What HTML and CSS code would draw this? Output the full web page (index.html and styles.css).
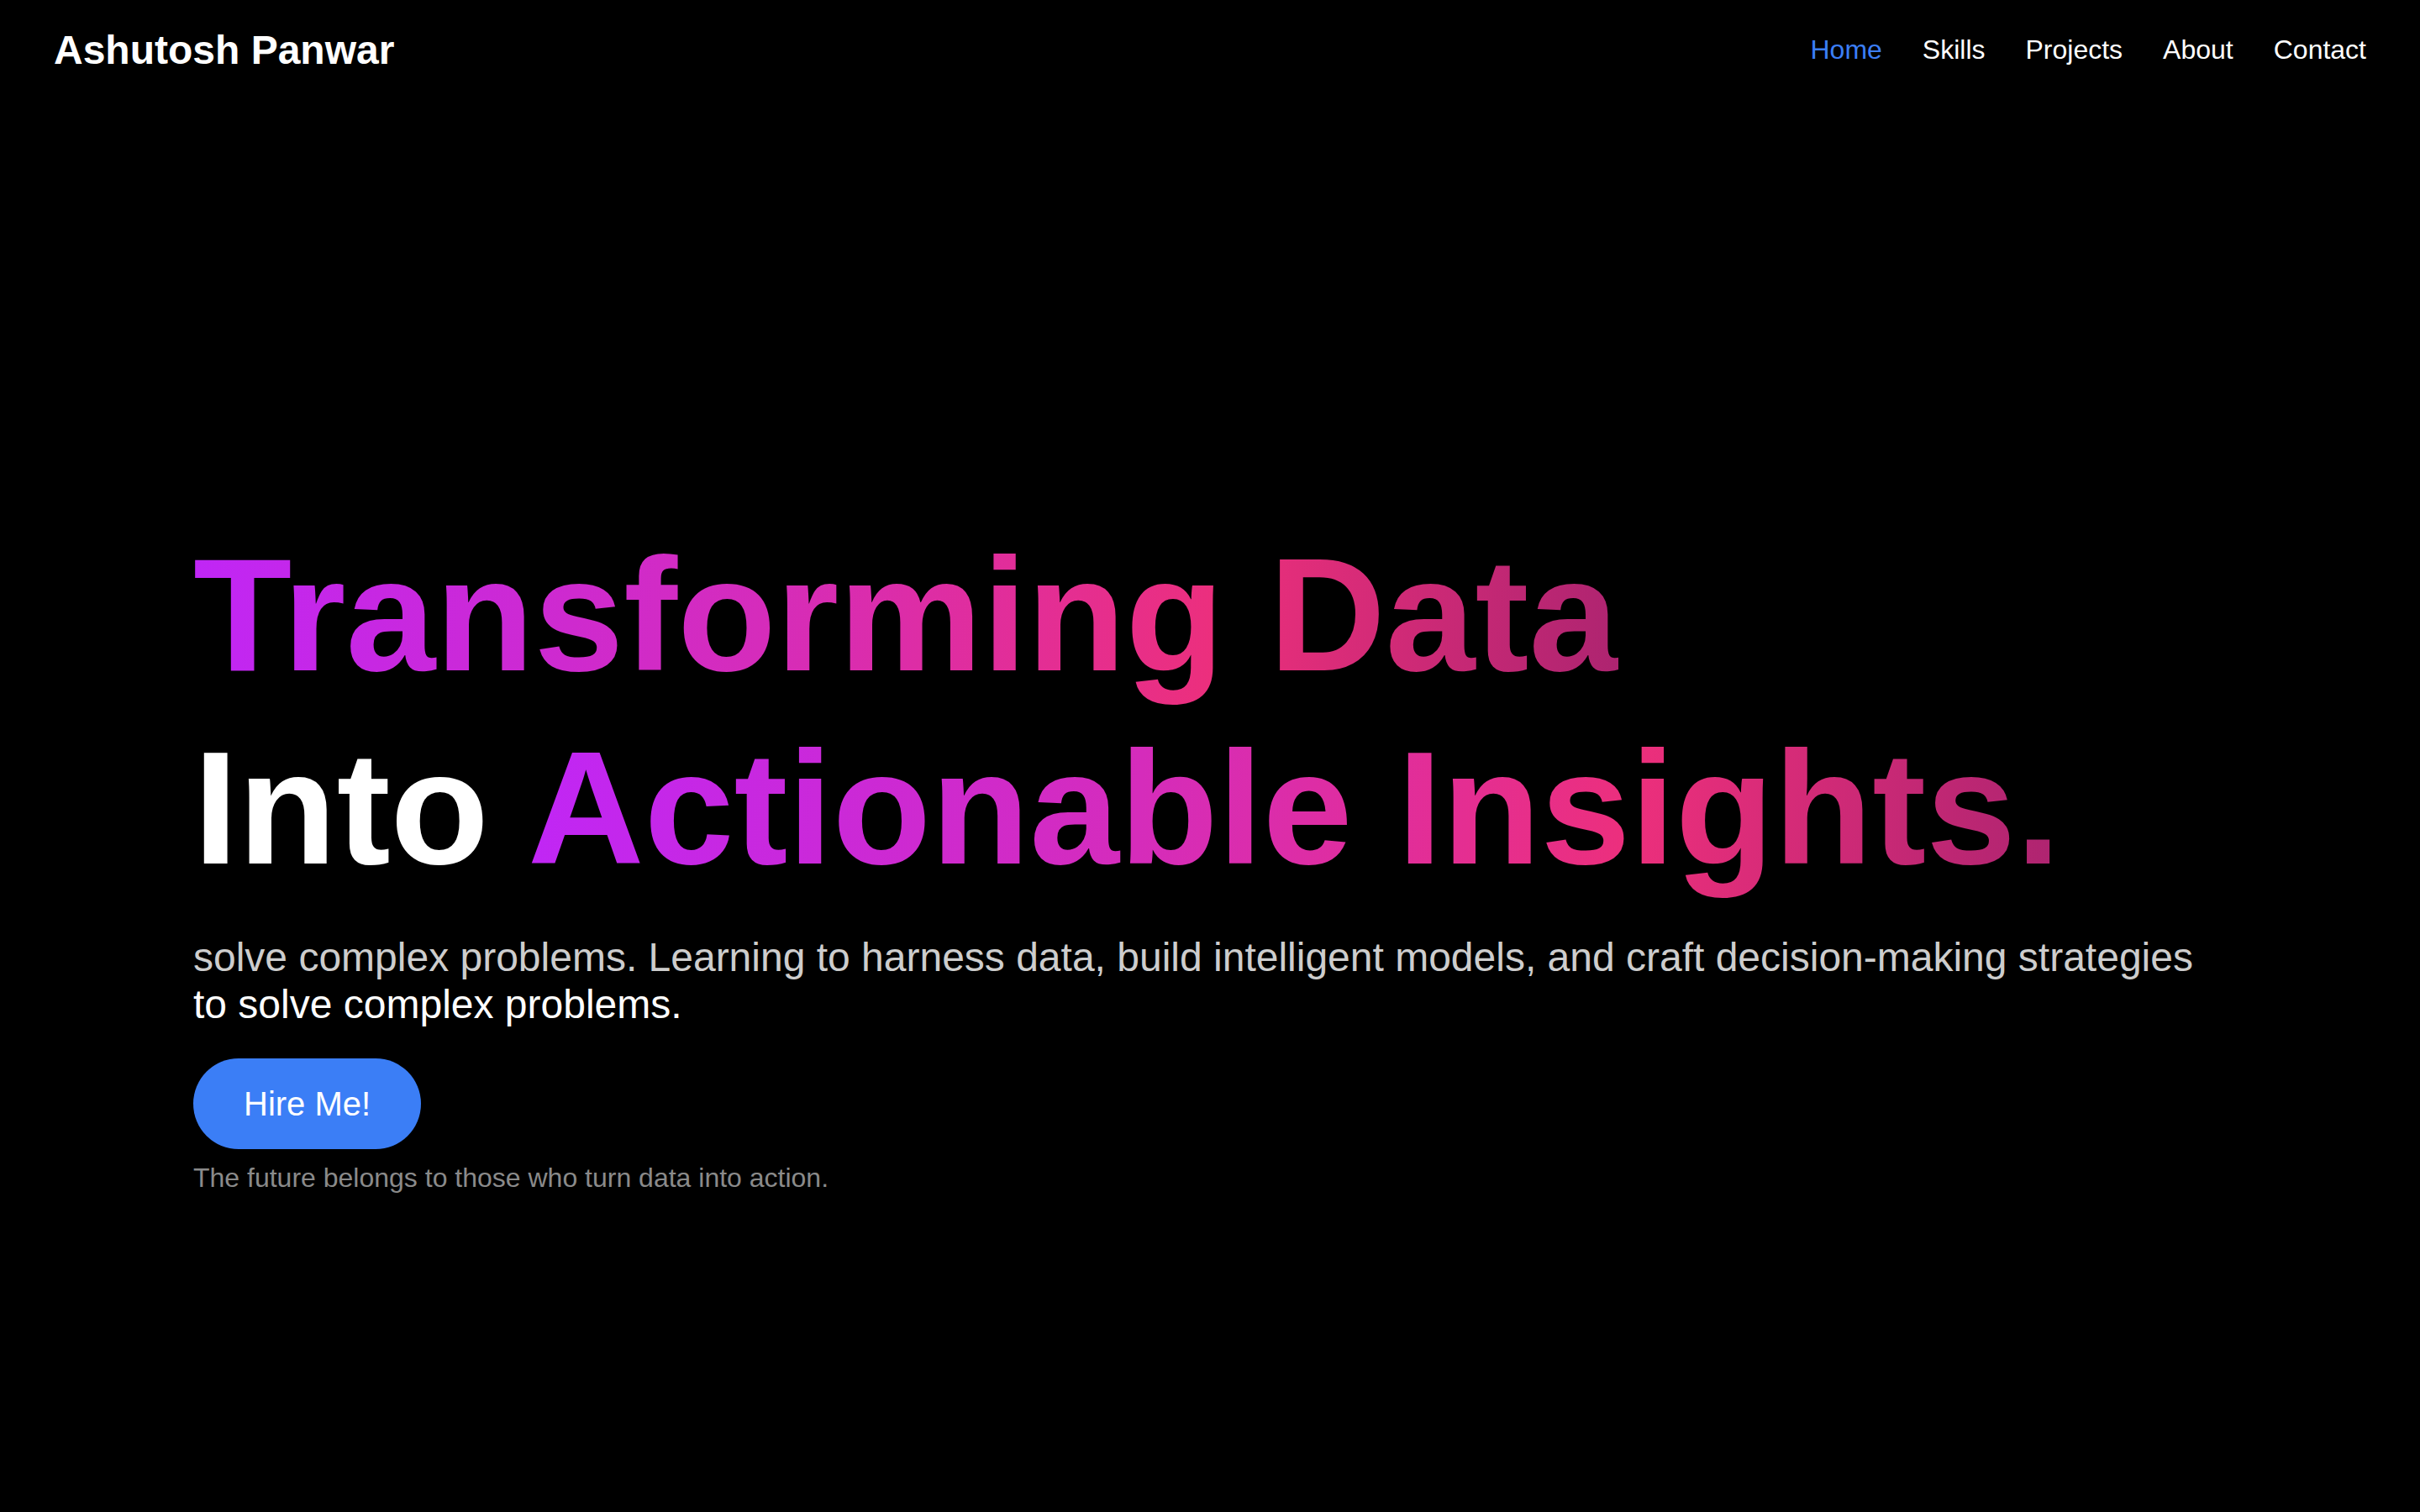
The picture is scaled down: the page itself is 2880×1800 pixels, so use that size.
FILE: index.html
```html
<!DOCTYPE html>
<html lang="en">
<head>
<meta charset="utf-8">
<title>Ashutosh Panwar</title>
<link rel="stylesheet" href="styles.css">
</head>
<body>
<header class="site-header">
  <a class="brand" href="#">Ashutosh Panwar</a>
  <nav class="nav">
    <a class="nav-link active" href="#">Home</a>
    <a class="nav-link" href="#">Skills</a>
    <a class="nav-link" href="#">Projects</a>
    <a class="nav-link" href="#">About</a>
    <a class="nav-link" href="#">Contact</a>
  </nav>
</header>
<section class="hero">
  <div class="hero-inner">
    <h1 class="hero-title">
      <span class="line"><span class="gradient">Transforming Data</span></span>
      <span class="line">Into <span class="gradient">Actionable Insights.</span></span>
    </h1>
    <p class="hero-text">solve complex problems. Learning to harness data, build intelligent models, and craft decision-making strategies <span class="hero-text-strong">to solve complex problems.</span></p>
    <div class="actions">
      <a class="btn" href="#">Hire Me!</a>
    </div>
    <p class="tagline">The future belongs to those who turn data into action.</p>
  </div>
</section>
</body>
</html>
```

FILE: styles.css
```css
html, body {
  margin: 0;
  padding: 0;
  background: #000;
  font-family: "Liberation Sans", Arial, Helvetica, sans-serif;
  color: #fff;
}

.site-header {
  display: flex;
  justify-content: space-between;
  align-items: center;
  padding: 32px 64px;
}

.brand {
  font-size: 48px;
  font-weight: 700;
  color: #fff;
  text-decoration: none;
  line-height: normal;
}

.nav {
  display: flex;
  gap: 48px;
}

.nav-link {
  font-size: 32px;
  color: #fff;
  text-decoration: none;
  line-height: normal;
}

.nav-link.active {
  color: #3b7ef6;
}

.hero {
  min-height: 100vh;
  box-sizing: border-box;
  display: flex;
  align-items: center;
  padding: 0 230px;
}

.hero-inner {
  width: 100%;
}

.hero-title {
  font-size: 192px;
  line-height: 1.2;
  font-weight: 700;
  margin: 0 0 35px;
  color: #fff;
}

.line {
  display: block;
}

.gradient {
  background: linear-gradient(95deg, #c026f6 0%, #d52cbb 40%, #ec2f7c 72%, #ad2470 100%);
  -webkit-background-clip: text;
  background-clip: text;
  color: transparent;
}

.hero-text {
  font-size: 48px;
  line-height: 56px;
  color: #cdcdcd;
  margin: 0 0 36px;
}

.hero-text-strong {
  display: block;
  color: #fff;
}

.actions {
  display: flex;
}

.btn {
  display: inline-block;
  background: #3b7ef6;
  color: #fff;
  font-size: 40px;
  line-height: 56px;
  padding: 26px 60px;
  border-radius: 9999px;
  text-decoration: none;
}

.tagline {
  font-size: 32px;
  line-height: normal;
  color: #8a8a8a;
  margin: 16px 0 0;
}
```
